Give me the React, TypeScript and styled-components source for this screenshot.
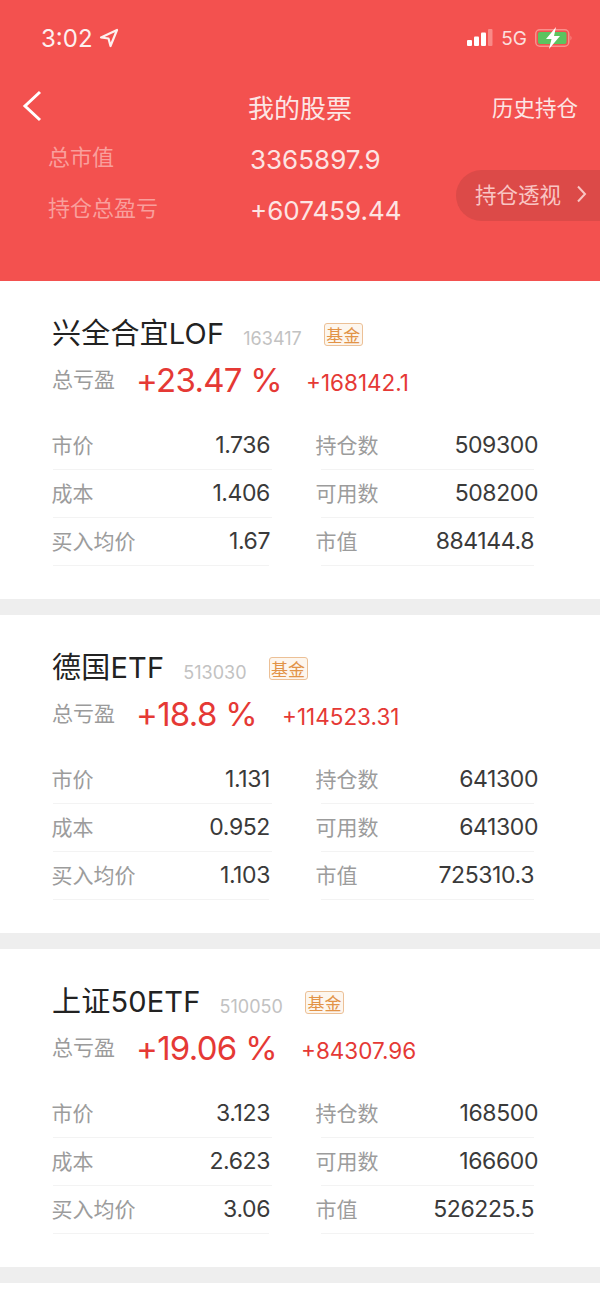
import React from 'react'
import styled, { createGlobalStyle } from 'styled-components'

const GlobalStyle = createGlobalStyle`
  html, body {
    margin: 0;
    padding: 0;
    background: #ffffff;
  }
  body {
    font-family: Inter, "Noto Sans CJK SC", sans-serif;
  }
`

const Page = styled.div`
  width: 600px;
  height: 1298px;
  overflow: hidden;
  background: #ffffff;
`

const Header = styled.header`
  position: relative;
  height: 281px;
  box-sizing: border-box;
  background: #f3514f;
  color: #ffffff;
`

const StatusBar = styled.div`
  height: 76px;
  box-sizing: border-box;
  padding: 24px 27px 0 41px;
  display: flex;
  justify-content: space-between;
  align-items: flex-start;
`

const Clock = styled.div`
  display: flex;
  align-items: center;
  gap: 6px;
  height: 28px;
  font-size: 24px;
  color: #fdf0ef;
`

const StatusRight = styled.div`
  display: flex;
  align-items: center;
  gap: 8px;
  height: 28px;
  font-size: 19px;
  color: #fbdedd;
`

const NavBar = styled.div`
  display: grid;
  grid-template-columns: 1fr auto 1fr;
  align-items: center;
  height: 60px;
  padding: 0 22px;
`

const NavTitle = styled.div`
  font-size: 26px;
  color: #fce6e5;
`

const NavAction = styled.div`
  justify-self: end;
  font-size: 21.5px;
  color: #fce6e5;
`

const Summary = styled.div`
  padding: 5px 0 0 48px;
`

const SummaryRow = styled.div`
  display: flex;
  height: 51px;
`

const SummaryLabel = styled.div`
  width: 202px;
  font-size: 22px;
  line-height: 32px;
  color: #f99f9c;
`

const SummaryValue = styled.div`
  font-size: 26px;
  line-height: 32px;
  padding-top: 3px;
  color: #fde4e3;
`

const Pill = styled.div`
  position: absolute;
  right: 0;
  top: 170px;
  width: 144px;
  height: 51px;
  box-sizing: border-box;
  padding: 0 0 4px 19px;
  display: flex;
  align-items: center;
  gap: 15px;
  border-radius: 26px 0 0 26px;
  background: #dc4a48;
  font-size: 21.5px;
  color: #f9c5c3;
`

const Card = styled.section`
  height: 318px;
  box-sizing: border-box;
  padding: 35px 0 0 52px;
  background: #ffffff;
`

const Gap = styled.div`
  height: 16px;
  background: #eeeeee;
`

const TitleRow = styled.div`
  display: flex;
  align-items: center;
  height: 36px;
`

const Name = styled.div`
  font-size: 29px;
  letter-spacing: 0.2px;
  line-height: 36px;
  color: #222222;
`

const Code = styled.div`
  margin-left: 19px;
  padding-top: 8px;
  font-size: 18px;
  color: #c2c2c2;
`

const Tag = styled.div`
  margin-left: 22px;
  width: 39px;
  height: 23px;
  box-sizing: border-box;
  display: flex;
  align-items: center;
  justify-content: center;
  border: 1px solid #ecc096;
  border-radius: 3px;
  background: #fdf6ee;
  font-size: 17px;
  color: #e29347;
`

const ProfitRow = styled.div`
  display: flex;
  align-items: center;
  height: 44px;
  margin-top: 7px;
`

const ProfitLabel = styled.div`
  width: 84px;
  font-size: 21px;
  padding-bottom: 6px;
  color: #9b9b9b;
`

const Percent = styled.div<{ $width: number }>`
  width: ${(p) => p.$width}px;
  font-size: 33px;
  letter-spacing: -0.7px;
  padding-bottom: 3px;
  color: #e53935;
`

const Amount = styled.div`
  padding-top: 2px;
  font-size: 22.5px;
  color: #e53935;
`

const Grid = styled.div`
  display: grid;
  grid-template-columns: 220px 222px;
  column-gap: 44px;
  margin-top: 19px;
`

// the hairline under a row is shorter than the row itself in the right column
const Cell = styled.div<{ $inset: number; $lineStart: number; $lineEnd: number }>`
  position: relative;
  display: flex;
  justify-content: space-between;
  align-items: center;
  height: 48px;
  box-sizing: border-box;
  padding: 0 ${(p) => p.$inset}px 2px 0;

  &::after {
    content: '';
    position: absolute;
    left: ${(p) => p.$lineStart}px;
    right: ${(p) => p.$lineEnd}px;
    bottom: 0;
    height: 1px;
    background: #f3f3f3;
  }
`

const CellLabel = styled.span`
  margin-left: -0.5px;
  padding-bottom: 3px;
  font-size: 21px;
  color: #9c9c9c;
`

const CellValue = styled.span`
  font-size: 23px;
  letter-spacing: -0.4px;
  color: #3a3a3a;
`

type Stock = {
  name: string
  code: string
  percent: string
  percentWidth: number
  amount: string
  price: string
  cost: string
  average: string
  held: string
  usable: string
  worth: string
}

const stocks: Stock[] = [
  {
    name: '兴全合宜LOF',
    code: '163417',
    percent: '+23.47 %',
    percentWidth: 170,
    amount: '+168142.1',
    price: '1.736',
    cost: '1.406',
    average: '1.67',
    held: '509300',
    usable: '508200',
    worth: '884144.8',
  },
  {
    name: '德国ETF',
    code: '513030',
    percent: '+18.8 %',
    percentWidth: 146,
    amount: '+114523.31',
    price: '1.131',
    cost: '0.952',
    average: '1.103',
    held: '641300',
    usable: '641300',
    worth: '725310.3',
  },
  {
    name: '上证50ETF',
    code: '510050',
    percent: '+19.06 %',
    percentWidth: 165,
    amount: '+84307.96',
    price: '3.123',
    cost: '2.623',
    average: '3.06',
    held: '168500',
    usable: '166600',
    worth: '526225.5',
  },
]

function StockCard({ stock }: { stock: Stock }) {
  return (
    <Card>
      <TitleRow>
        <Name>{stock.name}</Name>
        <Code>{stock.code}</Code>
        <Tag>基金</Tag>
      </TitleRow>
      <ProfitRow>
        <ProfitLabel>总亏盈</ProfitLabel>
        <Percent $width={stock.percentWidth}>{stock.percent}</Percent>
        <Amount>{stock.amount}</Amount>
      </ProfitRow>
      <Grid>
        <Cell $inset={2} $lineStart={1} $lineEnd={0}>
          <CellLabel>市价</CellLabel>
          <CellValue>{stock.price}</CellValue>
        </Cell>
        <Cell $inset={0} $lineStart={5} $lineEnd={4}>
          <CellLabel>持仓数</CellLabel>
          <CellValue>{stock.held}</CellValue>
        </Cell>
        <Cell $inset={2} $lineStart={1} $lineEnd={0}>
          <CellLabel>成本</CellLabel>
          <CellValue>{stock.cost}</CellValue>
        </Cell>
        <Cell $inset={0} $lineStart={5} $lineEnd={4}>
          <CellLabel>可用数</CellLabel>
          <CellValue>{stock.usable}</CellValue>
        </Cell>
        <Cell $inset={2} $lineStart={1} $lineEnd={3}>
          <CellLabel>买入均价</CellLabel>
          <CellValue>{stock.average}</CellValue>
        </Cell>
        <Cell $inset={4} $lineStart={5} $lineEnd={4}>
          <CellLabel>市值</CellLabel>
          <CellValue>{stock.worth}</CellValue>
        </Cell>
      </Grid>
    </Card>
  )
}

function LocationArrow() {
  return (
    <svg width="20" height="20" viewBox="0 0 20 20" fill="none" stroke="#fdf0ef" strokeWidth="2.2" strokeLinejoin="round">
      <path d="M2 9.5 L18 2 L11.5 18 L9.5 10.5 Z" />
    </svg>
  )
}

function SignalBars() {
  return (
    <svg width="26" height="18" viewBox="0 0 26 18">
      <rect x="0" y="11" width="5" height="6" rx="1" fill="#ffffff" />
      <rect x="7" y="7.5" width="5" height="9.5" rx="1" fill="#ffffff" />
      <rect x="14" y="3.5" width="5" height="13.5" rx="1" fill="#ffffff" />
      <rect x="21" y="0" width="4.5" height="17" rx="1" fill="#f98a87" />
    </svg>
  )
}

function Battery() {
  return (
    <svg width="38" height="22" viewBox="0 0 38 22">
      <rect x="0.75" y="2.75" width="33" height="16.5" rx="4" fill="none" stroke="#f98f8b" strokeWidth="1.5" />
      <rect x="3" y="5" width="28.5" height="12" rx="2" fill="#5cc35f" />
      <path d="M35.5 8.5 q2 2.5 0 5 z" fill="#f98f8b" />
      <path d="M21 0 L11 12 L16.5 12 L14 22 L25 9 L19 9 Z" fill="#ffffff" />
    </svg>
  )
}

function BackChevron() {
  return (
    <svg width="20" height="32" viewBox="0 0 20 32" fill="none" stroke="#ffffff" strokeWidth="3">
      <path d="M18 2 L3 16 L18 30" />
    </svg>
  )
}

function SmallChevron() {
  return (
    <svg width="11" height="18" viewBox="0 0 11 18" fill="none" stroke="#f9c5c3" strokeWidth="2">
      <path d="M2 1.5 L9 9 L2 16.5" />
    </svg>
  )
}

export default function App() {
  return (
    <Page>
      <GlobalStyle />
      <Header>
        <StatusBar>
          <Clock>
            3:02
            <LocationArrow />
          </Clock>
          <StatusRight>
            <SignalBars />
            5G
            <Battery />
          </StatusRight>
        </StatusBar>
        <NavBar>
          <BackChevron />
          <NavTitle>我的股票</NavTitle>
          <NavAction>历史持仓</NavAction>
        </NavBar>
        <Summary>
          <SummaryRow>
            <SummaryLabel>总市值</SummaryLabel>
            <SummaryValue>3365897.9</SummaryValue>
          </SummaryRow>
          <SummaryRow>
            <SummaryLabel>持仓总盈亏</SummaryLabel>
            <SummaryValue>+607459.44</SummaryValue>
          </SummaryRow>
        </Summary>
        <Pill>
          持仓透视
          <SmallChevron />
        </Pill>
      </Header>
      {stocks.map((stock) => (
        <React.Fragment key={stock.code}>
          <StockCard stock={stock} />
          <Gap />
        </React.Fragment>
      ))}
    </Page>
  )
}
